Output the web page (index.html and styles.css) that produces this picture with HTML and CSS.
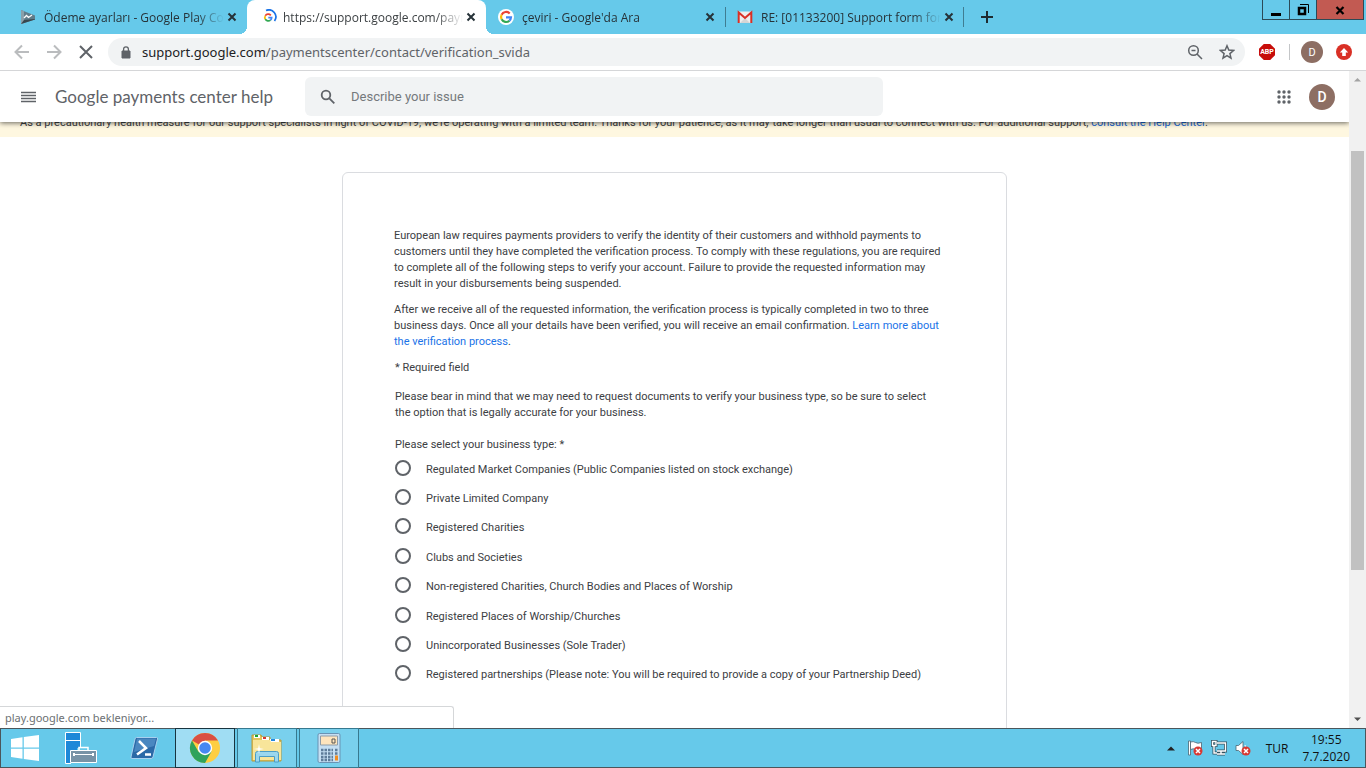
FILE: index.html
```html
<!DOCTYPE html>
<html lang="en">
<head>
<meta charset="utf-8">
<title>Google payments center help</title>
<link rel="stylesheet" href="styles.css">
</head>
<body>
<div class="tabs">
  <div class="tab">
    <svg class="fav" viewBox="0 0 16 16"><path d="M1 1l14 5.500v4L1 15z" fill="#607d8b"/><path d="M1 1l3 1v12l-3 1z" fill="#8aa0aa"/><path d="M1 15l3-4 11-1v.5z" fill="#37474f"/><path d="M4 9l2.500-2.500 2 2L12 6" fill="none" stroke="#fff" stroke-width="1.300"/></svg>
    <span class="tab-title">Ödeme ayarları - Google Play Co</span>
    <button class="close" aria-label="Close tab"><svg viewBox="0 0 10 10"><path d="M1.500 1.500l7 7M8.500 1.500l-7 7"/></svg></button>
  </div>
  <div class="tab active">
    <svg class="fav" viewBox="0 0 16 16"><path d="M5 1.500A7 7 0 0 1 13.500 12" fill="none" stroke="#1a73e8" stroke-width="1.700"/><g fill="none" stroke-width="1.700"><path d="M9.800 6.300A3.500 3.500 0 0 0 4.300 6.800" stroke="#ea4335"/><path d="M4.300 6.800a3.500 3.500 0 0 0 0 3.400" stroke="#fbbc05"/><path d="M4.300 10.200a3.500 3.500 0 0 0 5.200 1" stroke="#34a853"/><path d="M9.500 11.200a3.500 3.500 0 0 0 1.200-2.600H7.300" stroke="#4285f4"/></g></svg>
    <span class="tab-title">https://support.google.com/payn</span>
    <button class="close" aria-label="Close tab"><svg viewBox="0 0 10 10"><path d="M1.500 1.500l7 7M8.500 1.500l-7 7"/></svg></button>
  </div>
  <div class="tab">
    <svg class="fav" viewBox="0 0 16 16"><circle cx="8" cy="8" r="8" fill="#fff"/><g fill="none" stroke-width="2.200"><path d="M11.700 4.500A5 5 0 0 0 3.600 5.700" stroke="#ea4335"/><path d="M3.600 5.700a5 5 0 0 0 0 4.600" stroke="#fbbc05"/><path d="M3.600 10.300a5 5 0 0 0 7.800 1.400" stroke="#34a853"/><path d="M11.400 11.700A5 5 0 0 0 13 8.300H8" stroke="#4285f4"/></g></svg>
    <span class="tab-title">çeviri - Google'da Ara</span>
    <button class="close" aria-label="Close tab"><svg viewBox="0 0 10 10"><path d="M1.500 1.500l7 7M8.500 1.500l-7 7"/></svg></button>
  </div>
  <div class="tab divided">
    <svg class="fav" viewBox="0 0 16 16"><path d="M1 2.500h14v11.500H1z" fill="#eee"/><path d="M3 14l5-5 5 5z" fill="#d5d5d5"/><path d="M1.700 14V3.500L8 9l6.300-5.500V14" fill="none" stroke="#d93025" stroke-width="2"/></svg>
    <span class="tab-title">RE: [01133200] Support form for</span>
    <button class="close" aria-label="Close tab"><svg viewBox="0 0 10 10"><path d="M1.500 1.500l7 7M8.500 1.500l-7 7"/></svg></button>
  </div>
  <button class="new-tab" aria-label="New tab"><svg viewBox="0 0 12 12"><path d="M6 0v12M0 6h12"/></svg></button>
  <div class="window-controls">
    <button aria-label="Minimize"><svg viewBox="0 0 12 12"><path d="M1 9h10v3H1z"/></svg></button>
    <button aria-label="Restore"><svg viewBox="0 0 12 12"><path d="M3 .5h8.500V9" fill="none" stroke="#000"/><path d="M2 4h6v6H2z" fill="none" stroke="#000" stroke-width="2.500"/></svg></button>
    <button class="exit" aria-label="Close"><svg viewBox="0 0 12 12"><path d="M2.500 3l7 7M9.500 3l-7 7" stroke="#000" stroke-width="2.200"/></svg></button>
  </div>
</div>

<div class="toolbar">
  <button class="nav dim" aria-label="Back"><svg viewBox="0 0 16 16"><path d="M15 8H2M8 1.500L1.500 8 8 14.500"/></svg></button>
  <button class="nav dim" aria-label="Forward"><svg viewBox="0 0 16 16"><path d="M1 8h13M8 1.500L14.500 8 8 14.500"/></svg></button>
  <button class="nav" aria-label="Stop"><svg viewBox="0 0 16 16"><path d="M2 2l12 12M14 2L2 14"/></svg></button>
  <div class="omnibox">
    <svg class="lock" viewBox="0 0 10 13"><path d="M1 5h8v7H1z" fill="#5f6368" stroke="#5f6368" stroke-linejoin="round"/><path d="M2.600 5V3.300a2.400 2.400 0 0 1 4.800 0V5" fill="none" stroke="#5f6368" stroke-width="1.300"/></svg>
    <span class="url">support.google.com<span>/paymentscenter/contact/verification_svida</span></span>
    <button class="nav small" aria-label="Zoom"><svg viewBox="0 0 16 16"><circle cx="6.500" cy="6.500" r="4.800"/><path d="M4.500 6.500h4M10 10l5 5"/></svg></button>
    <button class="nav small" aria-label="Bookmark"><svg viewBox="0 0 16 16"><path d="M8 1.800l1.800 4.300 4.700.4-3.600 3.100 1.100 4.600L8 11.700l-4 2.500 1.100-4.600-3.600-3.100 4.700-.4z"/></svg></button>
  </div>
  <div class="extensions">
    <button class="abp" aria-label="Adblock"><span>ABP</span></button>
    <button class="avatar" aria-label="Profile">D</button>
    <button class="update" aria-label="Update"><svg viewBox="0 0 16 16"><circle cx="8" cy="8" r="8" fill="#d93025"/><path d="M8 4l4.200 4.500H9.800V12H6.200V8.500H3.800z" fill="#fff"/></svg></button>
  </div>
</div>

<div class="viewport">
  <div class="page">
    <header class="header">
      <button class="menu" aria-label="Main menu"><svg viewBox="0 0 16 12"><path d="M0 1.500h15M0 4.500h15M0 7.500h15M0 10.500h15"/></svg></button>
      <h1>Google payments center help</h1>
      <label class="search">
        <svg viewBox="0 0 16 16"><circle cx="6" cy="6" r="4.300"/><path d="M9.300 9.300l5 5"/></svg>
        <input type="text" placeholder="Describe your issue" aria-label="Describe your issue">
      </label>
      <button class="apps" aria-label="Google apps"><svg viewBox="0 0 14 14"><g fill="#5f6368"><circle cx="2" cy="2" r="1.700"/><circle cx="7" cy="2" r="1.700"/><circle cx="12" cy="2" r="1.700"/><circle cx="2" cy="7" r="1.700"/><circle cx="7" cy="7" r="1.700"/><circle cx="12" cy="7" r="1.700"/><circle cx="2" cy="12" r="1.700"/><circle cx="7" cy="12" r="1.700"/><circle cx="12" cy="12" r="1.700"/></g></svg></button>
      <button class="avatar large" aria-label="Account">D</button>
    </header>
    <div class="banner"><p>As a precautionary health measure for our support specialists in light of COVID-19, we're operating with a limited team. Thanks for your patience, as it may take longer than usual to connect with us. For additional support, <a href="#">consult the Help Center</a>.</p></div>
    <main class="content">
      <form class="card">
        <p>European law requires payments providers to verify the identity of their customers and withhold payments to<br>customers until they have completed the verification process. To comply with these regulations, you are required<br>to complete all of the following steps to verify your account. Failure to provide the requested information may<br>result in your disbursements being suspended.</p>
        <p>After we receive all of the requested information, the verification process is typically completed in two to three<br>business days. Once all your details have been verified, you will receive an email confirmation. <a href="#">Learn more about<br>the verification process</a>.</p>
        <div class="fields">
          <p>* Required field</p>
          <p class="note">Please bear in mind that we may need to request documents to verify your business type, so be sure to select<br>the option that is legally accurate for your business.</p>
          <fieldset>
            <legend>Please select your business type: *</legend>
            <div class="options">
              <label><input type="radio" name="type"><span>Regulated Market Companies (Public Companies listed on stock exchange)</span></label>
              <label><input type="radio" name="type"><span>Private Limited Company</span></label>
              <label><input type="radio" name="type"><span>Registered Charities</span></label>
              <label><input type="radio" name="type"><span>Clubs and Societies</span></label>
              <label><input type="radio" name="type"><span>Non-registered Charities, Church Bodies and Places of Worship</span></label>
              <label><input type="radio" name="type"><span>Registered Places of Worship/Churches</span></label>
              <label><input type="radio" name="type"><span>Unincorporated Businesses (Sole Trader)</span></label>
              <label><input type="radio" name="type"><span>Registered partnerships (Please note: You will be required to provide a copy of your Partnership Deed)</span></label>
            </div>
          </fieldset>
        </div>
      </form>
    </main>
  </div>
  <div class="scrollbar">
    <svg viewBox="0 0 17 17"><path d="M5 10.500h7L8.500 7z" fill="#a3a3a3"/></svg>
    <div class="track"><div class="thumb"></div></div>
    <svg viewBox="0 0 17 17"><path d="M5 6.500h7L8.500 10z" fill="#505050"/></svg>
  </div>
  <div class="status">play.google.com bekleniyor...</div>
</div>

<div class="taskbar">
  <button class="start" aria-label="Start"><svg viewBox="0 0 28 26"><g fill="#fff"><path d="M0 4l11.500-1.700V12.500H0zM12.800 2L28 0v12.500H12.800zM0 13.700h11.500v10L0 22zM12.800 13.700H28V26l-15.200-2z"/></g></svg></button>
  <button class="launch" aria-label="Server Manager"><svg viewBox="0 0 32 32"><path d="M.5.500h15v31H.5z" fill="#1e88d8" stroke="#fff"/><path d="M1 8.500h15" stroke="#fff"/><path d="M6 19h6v-3h12v3h8v13H6z" fill="#66c9ea"/><path d="M5.500 18.500h26v12h-26z" fill="#7893a6" stroke="#fff"/><path d="M14 18v-2.500h9V18" fill="none" stroke="#fff" stroke-width="1.500"/><path d="M8 22.500h21" stroke="#fff"/><path d="M9 21v3M28 21v3" stroke="#fff" stroke-width="2"/></svg></button>
  <button class="launch wide" aria-label="PowerShell"><svg viewBox="0 0 32 32"><path d="M8.500 5.500h20q1.500 0 1 1.500l-4.500 18q-.4 1.500-2 1.500H4q-1.500 0-1-1.500L7 7q.3-1.500 1.500-1.500z" fill="#2b69a7" stroke="#a8d0ef"/><path d="M9 6.500h19L26 14 6 20z" fill="#5f9bd0" opacity=".6"/><path d="M11 9l7 7-9 6.500M17 22.500h6" fill="none" stroke="#fff" stroke-width="2.500"/></svg></button>
  <button class="task current" aria-label="Chrome"><svg viewBox="0 0 32 32"><circle cx="16" cy="16" r="15" fill="#fdce42"/><path d="M16 16L3 8.500A15 15 0 0 1 29 8.500H16z" fill="#d94f43"/><path d="M3 8.500a15 15 0 0 0 13 22.500l6.500-11.500L16 16l-6.500 3.700z" fill="#2fa35b"/><circle cx="16" cy="16" r="7.200" fill="#fff"/><circle cx="16" cy="16" r="5.800" fill="#4688f1"/></svg></button>
  <button class="task" aria-label="File Explorer"><svg viewBox="0 0 32 32"><path d="M1 5V3h9l1 2h8v3h11v21H1z" fill="#e4c65e" stroke="#b89a3b"/><path d="M3 3h6v3H3z" fill="#fff"/><path d="M4 3h3v2H4z" fill="#18a532"/><path d="M11 5h7v3h-7z" fill="#fff"/><path d="M12 5h3v2h-3z" fill="#d63a32"/><path d="M19 7h9v3h-9z" fill="#fff"/><path d="M20 7h4v2h-4z" fill="#2389df"/><path d="M2 8h17l1 2h10v18H2z" fill="#f8e59a"/><path d="M4.500 30V21.500q0-2 2-2h19q2 0 2 2V30h-4v-5.500h-15V30z" fill="#9bd7ee" stroke="#4b9dc5"/><path d="M8 12l.8 4.200L13 17l-4.200.8L8 22l-.8-4.200L3 17l4.200-.8z" fill="#fff"/></svg></button>
  <button class="task" aria-label="Calculator"><svg viewBox="0 0 32 32"><rect x="5" y="1.500" width="22" height="29" rx="1.500" fill="#c5dff3" stroke="#6993b4"/><path d="M7.500 4h17v9h-17z" fill="#ffe5bd" stroke="#8d9ca9"/><path d="M19 7h3v4h-3z" fill="none" stroke="#555"/><path d="M8 18h12M8 21.500h12M8 25h12M8 28h12M22 18h3M22 21.500h3" stroke="#5f7d9a" stroke-width="2.500" stroke-dasharray="2.500 1"/><path d="M22 23.500h3v5h-3z" fill="#f08c22"/></svg></button>
  <div class="tray">
    <svg class="caret" viewBox="0 0 8 5"><path d="M0 4.500h8L4 .5z" fill="#222"/></svg>
    <svg viewBox="0 0 16 16"><path d="M1.500 1h2v14h-2z" fill="#fff" stroke="#4a6472" stroke-width=".8"/><path d="M3.500 2q3-1 5 .5t6 0v7q-3 1.500-5.500 0t-5.500 0z" fill="#fff" stroke="#4a6472" stroke-width=".8"/><circle cx="11" cy="11" r="4.500" fill="#d83933"/><path d="M9 9l4 4M13 9l-4 4" stroke="#fff" stroke-width="1.500"/></svg>
    <svg viewBox="0 0 16 16"><g fill="none" stroke="#34525f" stroke-width="3"><path d="M6 3h8.500v8H6M10 11v3M6 14h8"/><path d="M1.500 1.500h3.500v4H1.500zM3 6v7h3"/></g><g fill="none" stroke="#fff" stroke-width="1.400"><path d="M6 3h8.500v8H6M10 11v3M6 14h8"/><path d="M1.500 1.500h3.500v4H1.500zM3 6v7h3"/></g></svg>
    <svg viewBox="0 0 16 16"><path d="M1 5.500h2.500L8 1.500v13L3.500 10.500H1z" fill="#fff" stroke="#4a6472" stroke-width=".8"/><path d="M10 5q2 3 0 6" fill="none" stroke="#fff"/><circle cx="11" cy="11" r="4.500" fill="#d83933"/><path d="M9 9l4 4M13 9l-4 4" stroke="#fff" stroke-width="1.500"/></svg>
    <span class="lang">TUR</span>
    <div class="clock"><span>19:55</span><span>7.7.2020</span></div>
  </div>
</div>
</body>
</html>
```
FILE: styles.css
```css
* { box-sizing: border-box; }

body {
  margin: 0;
  height: 100vh;
  display: flex;
  flex-direction: column;
  overflow: hidden;
  background: #fff;
  color: #3c4043;
  font-family: "Open Sans", "Noto Sans", sans-serif;
  font-size: 12px;
}

button {
  display: flex;
  align-items: center;
  justify-content: center;
  flex: none;
  margin: 0;
  padding: 0;
  border: 0;
  background: none;
  font: inherit;
}

svg { display: block; flex: none; }
a { color: #1967d2; text-decoration: none; }

/* Tab strip */
.tabs {
  flex: none;
  display: flex;
  height: 34px;
  padding-left: 8px;
  background: #66c9ea;
  color: #263238;
}
.tab {
  position: relative;
  display: flex;
  align-items: center;
  flex: 0 1 239px;
  min-width: 0;
  padding: 0 10px 0 12px;
}
.tab.active {
  background: #fff;
  border-radius: 8px 8px 0 0;
  color: #3c4043;
  padding-left: 14px;
}
.tab.active::before,
.tab.active::after {
  content: "";
  position: absolute;
  bottom: 0;
  width: 8px;
  height: 8px;
}
.tab.active::before { left: -8px; background: radial-gradient(circle at 0 0, transparent 8px, #fff 8px); }
.tab.active::after { right: -8px; background: radial-gradient(circle at 100% 0, transparent 8px, #fff 8px); }
.tab.divided::before,
.tab.divided::after {
  content: "";
  position: absolute;
  top: 7px;
  left: 0;
  width: 1px;
  height: 20px;
  background: #3f7d92;
}
.tab.divided::after { left: auto; right: 0; }
.fav { width: 16px; height: 16px; margin-right: 8px; }
.tab.active .fav { margin-right: 6px; }
.tab-title {
  flex: 1;
  min-width: 0;
  overflow: hidden;
  white-space: nowrap;
  -webkit-mask-image: linear-gradient(90deg, #000 calc(100% - 28px), transparent);
  mask-image: linear-gradient(90deg, #000 calc(100% - 28px), transparent);
}
.close { width: 10px; height: 16px; margin-left: 3px; }
.close svg { width: 10px; height: 10px; stroke: #263238; stroke-width: 2; }
.new-tab { width: 46px; }
.new-tab svg { width: 12px; height: 12px; stroke: #1d2a30; stroke-width: 2; }
.window-controls {
  display: flex;
  height: 20px;
  margin: 0 2px 0 auto;
  border: 1px solid #2b4a57;
  border-top: 0;
}
.window-controls button { width: 27px; border-right: 1px solid #2b4a57; }
.window-controls .exit { width: 46px; border: 0; background: #c25a52; }
.window-controls svg { width: 12px; height: 12px; }

/* Browser toolbar */
.toolbar {
  flex: none;
  display: flex;
  align-items: center;
  height: 37px;
  padding-left: 6px;
  border-bottom: 1px solid #d5d6d8;
}
.nav { width: 32px; height: 28px; }
.nav svg { width: 16px; height: 16px; fill: none; stroke: #5f6368; stroke-width: 2; }
.nav.dim svg { stroke: #babcbe; }
.nav.small svg { stroke-width: 1.5; }
.omnibox {
  flex: 1;
  min-width: 0;
  display: flex;
  align-items: center;
  height: 28px;
  margin-left: 6px;
  padding: 0 2px 0 13px;
  border-radius: 14px;
  background: #f1f3f4;
}
.lock { width: 10px; height: 13px; margin-right: 11px; }
.url {
  flex: 1;
  min-width: 0;
  overflow: hidden;
  white-space: nowrap;
  color: #202124;
  font: 13px/20px "Noto Sans", sans-serif;
}
.url span { color: #5f6368; }
.extensions { display: flex; align-items: center; width: 121px; padding: 0 14px; }
.abp {
  width: 16px;
  height: 16px;
  background: #c70d0a;
  clip-path: polygon(30% 0, 70% 0, 100% 30%, 100% 70%, 70% 100%, 30% 100%, 0 70%, 0 30%);
  color: #fff;
  font: bold 7px Roboto, sans-serif;
}
.avatar {
  width: 22px;
  height: 22px;
  border-radius: 50%;
  background: #8d6e63;
  color: #fff;
  font: 11px Roboto, sans-serif;
}
.extensions .avatar { position: relative; margin: 0 13px 0 26px; }
.extensions .avatar::before {
  content: "";
  position: absolute;
  left: -12px;
  width: 1px;
  height: 16px;
  background: #c4c6c8;
}
.update svg { width: 16px; height: 16px; }

/* Page area */
.viewport { position: relative; flex: 1; min-height: 0; display: flex; overflow: hidden; }
.page {
  flex: 1;
  min-width: 0;
  display: flex;
  flex-direction: column;
  overflow: hidden;
  font: 11px/16px Roboto, sans-serif;
}
.header {
  position: relative;
  z-index: 1;
  flex: none;
  display: flex;
  align-items: center;
  height: 51px;
  padding: 0 14px 0 21px;
  background: #fff;
  box-shadow: 0 1px 5px rgba(0, 0, 0, .6);
}
.menu svg { width: 16px; height: 12px; stroke: #5f6368; stroke-width: 1.5; }
.header h1 {
  flex: none;
  width: 250px;
  margin: 0 0 0 18px;
  color: #5f6368;
  font: 17px/24px Lato, sans-serif;
}
.search {
  display: flex;
  align-items: center;
  flex: 0 1 578px;
  height: 39px;
  padding: 0 15px;
  border-radius: 6px;
  background: #f1f3f4;
}
.search svg { width: 16px; height: 16px; fill: none; stroke: #5f6368; stroke-width: 1.8; }
.search input {
  flex: 1;
  min-width: 0;
  margin-left: 15px;
  padding: 0;
  border: 0;
  outline: 0;
  background: none;
  font: 13px/20px Roboto, sans-serif;
}
.search input::placeholder { color: #75797c; }
.apps { margin: 0 18px 0 auto; }
.apps svg { width: 14px; height: 14px; }
.avatar.large { width: 26px; height: 26px; font-size: 14px; font-weight: 500; }
.banner {
  flex: none;
  display: flex;
  align-items: flex-end;
  height: 15px;
  padding: 0 20px 6px;
  overflow: hidden;
  background: #fef7e0;
  white-space: nowrap;
}
.banner p { margin: 0; }

.content { flex: 1; min-height: 0; display: flex; justify-content: center; padding-top: 35px; }
.card {
  flex: 0 1 665px;
  height: max-content;
  min-height: 600px;
  padding: 55px 51px;
  border: 1px solid #dadce0;
  border-radius: 6px;
}
.card a { color: #1a73e8; }
.card p { margin: 0 0 10px; }
.fields { padding-left: 1px; }
.fields .note { margin: 13px 0 16px; }
fieldset { margin: 0; padding: 0; border: 0; min-width: 0; }
legend { padding: 0; }
.options { display: grid; grid-template-rows: repeat(8, 1fr); height: 235px; margin-top: 1px; }
.options label { display: flex; align-items: center; gap: 15px; }
.options input {
  appearance: none;
  flex: none;
  width: 16px;
  height: 16px;
  margin: 0 0 2px;
  border: 2px solid #5f6368;
  border-radius: 50%;
}
.options input:checked { border-width: 5px; border-color: #1a73e8; }
.options span { padding-top: 2px; }

.scrollbar { flex: none; display: flex; flex-direction: column; width: 17px; background: #f1f1f1; }
.scrollbar svg { width: 17px; height: 17px; }
.track { flex: 1; display: grid; grid-template-rows: 63fr 419fr 141fr; padding: 0 2px; }
.thumb { grid-row: 2; background: #c1c1c1; }

.status {
  position: absolute;
  left: 0;
  bottom: 0;
  z-index: 2;
  width: 454px;
  padding: 3px 5px 2px;
  border: 1px solid #d5d7d9;
  border-width: 1px 1px 0 0;
  border-radius: 0 3px 0 0;
  background: #fff;
  color: #6b6f72;
  font: 11px/16px "Noto Sans", sans-serif;
}

/* Taskbar */
.taskbar {
  flex: none;
  display: flex;
  height: 40px;
  border: 1px solid #4b565b;
  background: #66c9ea;
  color: #111;
}
.start { width: 48px; }
.start svg { width: 28px; height: 26px; }
.launch { width: 64px; }
.launch.wide { width: 62px; }
.launch svg, .task svg { width: 32px; height: 32px; }
.task {
  width: 60px;
  margin: -1px 2px -1px 0;
  border: 1px solid #37798f;
  background: #79d0ed;
}
.task.current { border-color: #18343f; background: #a0ddf3; }
.tray { display: flex; align-items: center; gap: 8px; margin-left: auto; padding-right: 15px; }
.tray svg { width: 16px; height: 16px; }
.tray .caret { width: 8px; height: 5px; margin-right: 4px; }
.lang { margin-left: 7px; }
.clock {
  display: flex;
  flex-direction: column;
  align-items: center;
  margin-left: 6px;
  line-height: 17px;
}
```
